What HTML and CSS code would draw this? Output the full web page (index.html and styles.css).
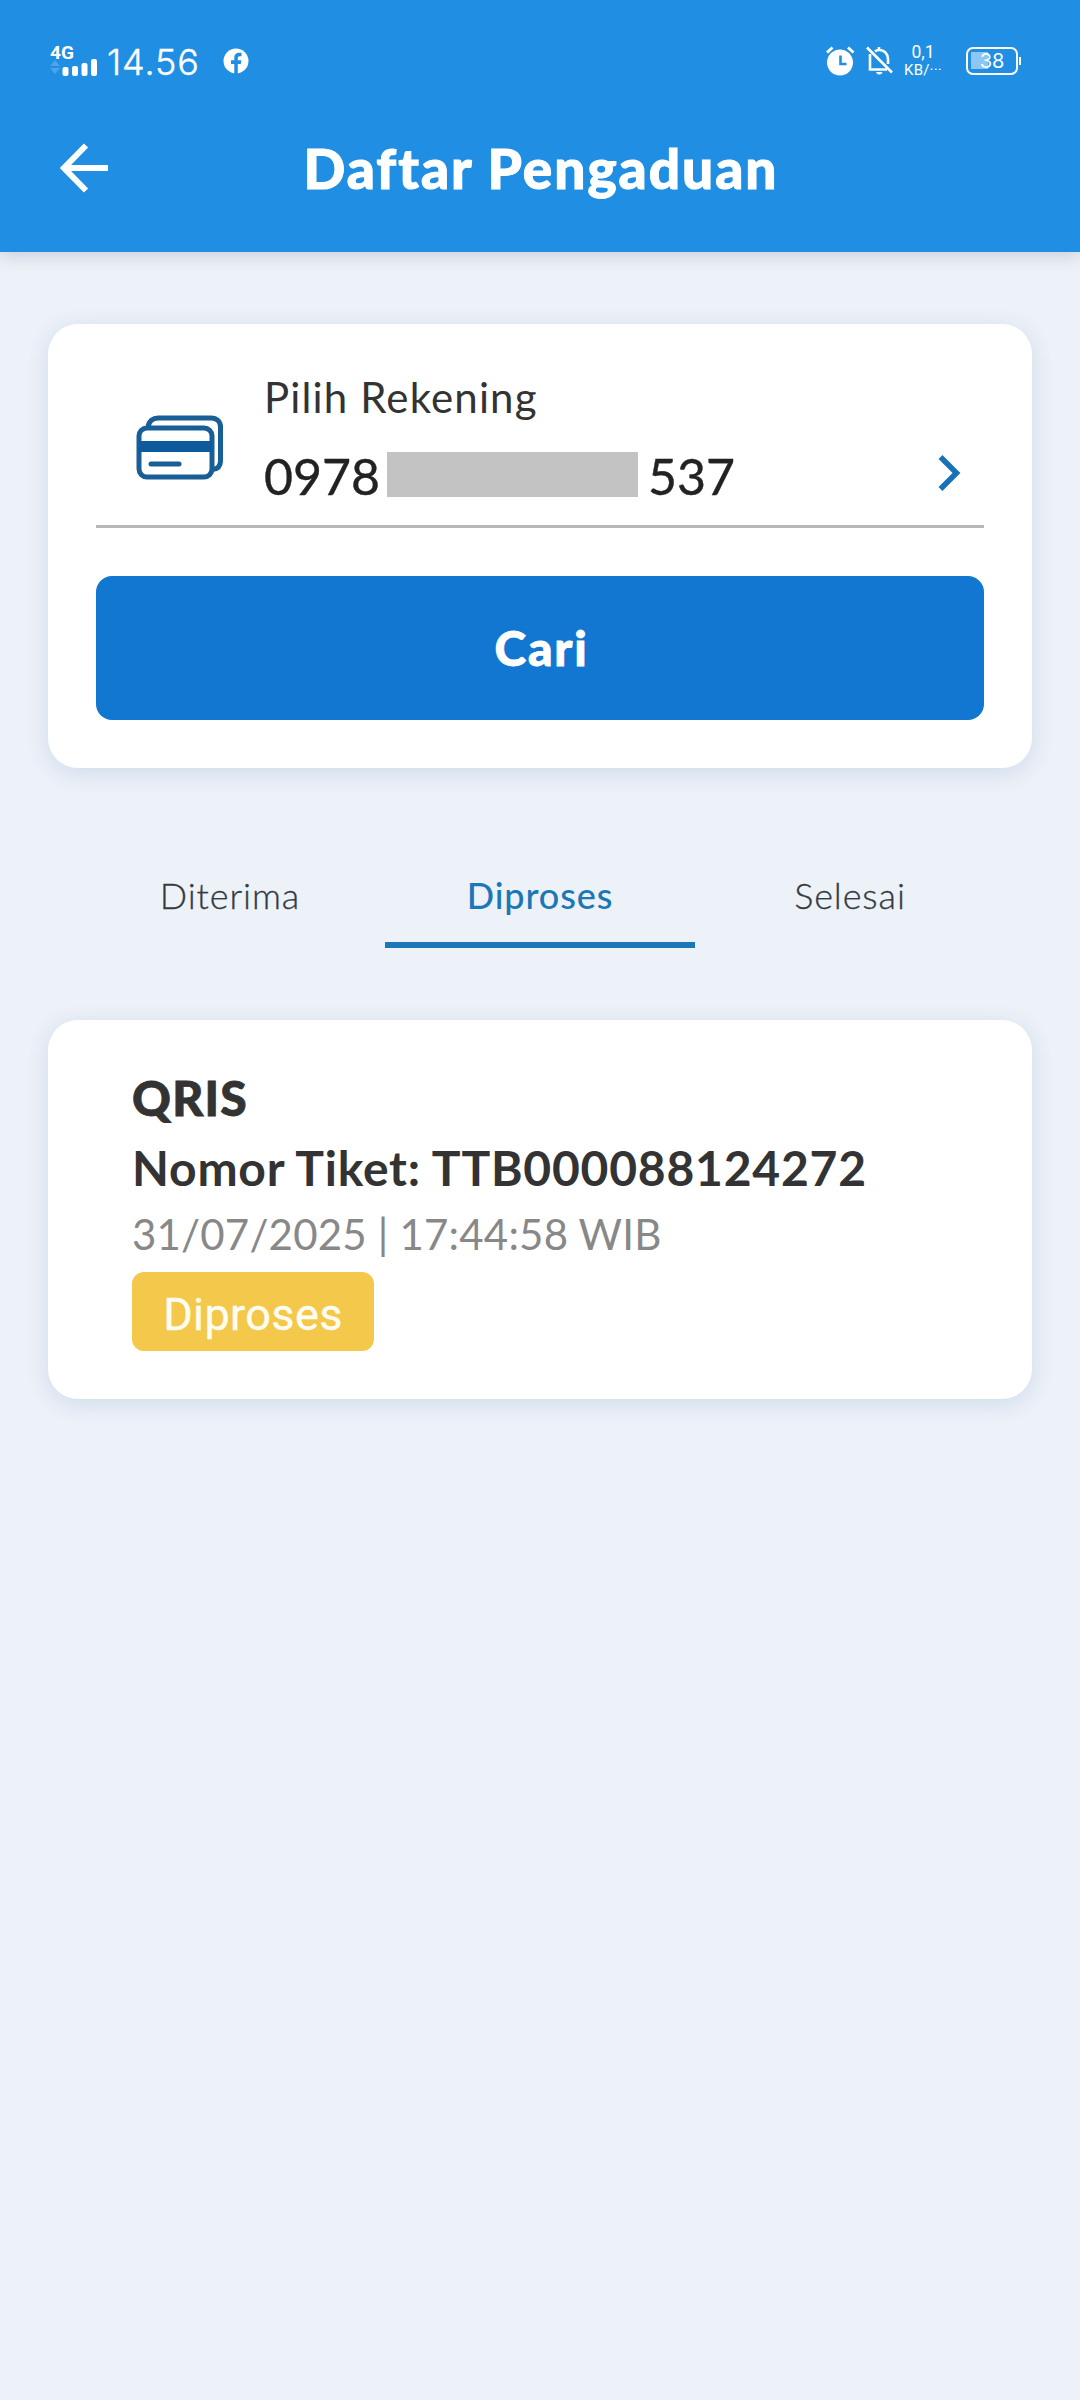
FILE: index.html
```html
<!DOCTYPE html>
<html lang="id">
<head>
<meta charset="utf-8">
<title>Daftar Pengaduan</title>
<link rel="stylesheet" href="styles.css">
</head>
<body>
<header class="app-header">
  <div class="status-bar">
    <div class="signal">
      <span class="network">4G</span>
      <svg class="bars" width="36" height="17" viewBox="0 0 36 17" fill="#fff"><rect x="0.500" y="8" width="6" height="9" rx="2"/><rect x="10" y="7" width="6" height="10" rx="2"/><rect x="19.500" y="4" width="6" height="13" rx="2"/><rect x="29" y="0" width="6" height="17" rx="2"/></svg>
      <svg class="traffic" width="10" height="14" viewBox="0 0 10 14" fill="#4ba3ec"><path d="M5 0l5 6H0zM5 14l5-6H0z"/></svg>
    </div>
    <span class="clock">14.56</span>
    <svg class="facebook" width="26" height="26" viewBox="0 0 26 26"><circle cx="13" cy="13" r="12.500" fill="#fff"/><path d="M11.300 26V16H8v-3.700h3.300V10c0-3.600 2-5.200 5-5.200h2.200v3.400h-1.700c-1.500 0-2 .8-2 2v2.100h3.600l-.6 3.700h-3V26z" fill="#1f8ee3"/></svg>
    <div class="status-right">
      <svg class="alarm" width="30" height="30" viewBox="0 0 30 30"><circle cx="14" cy="16.500" r="13" fill="#fff"/><path d="M1 6.500L6.500 1.500M27.500 6.500L22 1.500" stroke="#fff" stroke-width="3"/><path d="M14.500 9.500v8.500h6" fill="none" stroke="#1f8ee3" stroke-width="2.600"/></svg>
      <svg class="bell" width="28" height="30" viewBox="0 0 28 30" fill="none" stroke="#fff" stroke-width="2.600"><path d="M4 8v15.500h17M9 5.500c1-1 2-1.500 4-1.500 5.500 0 9 4 9 9v5M13 1v3M1 1.500l25 25"/><path d="M10.500 26.500h5.500c-.5 2-5 2-5.500 0z" fill="#fff" stroke-width="1"/></svg>
      <div class="speed"><span>0,1</span><span>KB/···</span></div>
      <div class="battery"><span>38</span></div>
    </div>
  </div>
  <div class="title-bar">
    <svg class="back" width="50" height="50" viewBox="0 0 50 50" fill="none" stroke="#fff" stroke-width="6"><path d="M48 25H4M26 2.500L4 25l22 22.500"/></svg>
    <h1 class="title">Daftar Pengaduan</h1>
  </div>
</header>
<main class="content">
  <section class="card search-card">
    <div class="account">
      <svg class="cards-icon" width="88" height="66" viewBox="0 0 88 66" fill="none" stroke="#185f98" stroke-width="5"><path d="M12 12c1-6 5-9 10-9h53c6 0 9.500 4 9.500 9v34c0 5-3 8-8 8.500"/><rect x="3" y="13" width="73" height="49" rx="8"/><path d="M3 31.500h73" stroke="#0d5a9c" stroke-width="11"/><path d="M15 49h28" stroke-linecap="round"/></svg>
      <div class="account-text">
        <div class="label">Pilih Rekening</div>
        <div class="number"><span>0978</span><span class="mask"></span><span>537</span></div>
      </div>
      <svg class="chevron" width="24" height="38" viewBox="0 0 24 38" fill="none" stroke="#1872b8" stroke-width="5.500"><path d="M2.500 3L18.500 19 2.500 35"/></svg>
    </div>
    <button class="search-button">Cari</button>
  </section>
  <nav class="tabs">
    <div class="tab">Diterima</div>
    <div class="tab active">Diproses</div>
    <div class="tab">Selesai</div>
  </nav>
  <article class="card ticket">
    <div class="kind">QRIS</div>
    <div class="ticket-number">Nomor Tiket: TTB000088124272</div>
    <div class="date">31/07/2025 | 17:44:58 WIB</div>
    <div class="badge">Diproses</div>
  </article>
</main>
</body>
</html>
```
FILE: styles.css
```css
* { box-sizing: border-box; }
body {
  margin: 0;
  min-height: 2400px;
  background: #edf1f8;
  color: #333;
  font-family: Lato, "Open Sans", sans-serif;
  font-variant-ligatures: none;
}
svg { display: block; flex: none; }
.app-header {
  height: 252px;
  background: #1f8ee3;
  color: #fff;
  box-shadow: 0 3px 16px rgba(60, 80, 110, .22);
}
.status-bar {
  display: flex;
  height: 120px;
  padding: 2px 62px 0 50px;
  align-items: center;
  font-family: Inter, sans-serif;
}
.signal {
  display: grid;
  grid-template-columns: 12px 36px;
  grid-template-rows: 15px 17px;
  width: 48px;
  height: 32px;
}
.network { grid-column: 1 / 3; font: 700 19px/15px Roboto, sans-serif; }
.bars { grid-column: 2; grid-row: 2; margin-top: -1px; }
.traffic { grid-column: 1; grid-row: 2; }
.clock {
  margin-left: 9px;
  padding-top: 2px;
  font-size: 36px;
  font-weight: 300;
  letter-spacing: .9px;
  -webkit-text-stroke: .4px #fff;
}
.facebook { margin-left: 23px; }
.status-right { display: flex; align-items: center; margin-left: auto; height: 40px; }
.alarm { margin-left: -1px; }
.bell { margin-left: 10px; }
.speed {
  display: grid;
  grid-template-rows: 18px 16px;
  justify-items: center;
  width: 42px;
  margin-left: 8px;
  font: 17.500px/16px Roboto, sans-serif;
}
.speed span:last-child { font-size: 15px; letter-spacing: .2px; }
.battery {
  position: relative;
  display: flex;
  align-items: center;
  justify-content: center;
  width: 52px;
  height: 28px;
  margin-left: 22px;
  border: 2.500px solid #fff;
  border-radius: 7px;
  background: linear-gradient(#8ec6f3, #8ec6f3) 3px 3px / 17px 17px no-repeat;
  font-size: 20px;
}
.battery::after {
  content: "";
  position: absolute;
  right: -5px;
  width: 2px;
  height: 8px;
  background: #fff;
}
.title-bar {
  display: flex;
  align-items: center;
  height: 96px;
  padding: 0 60px;
}
.title {
  flex: 1;
  margin: 0 48px 0 0;
  font-size: 55px;
  font-weight: 900;
  letter-spacing: 1.950px;
  line-height: 96px;
  text-align: center;
  -webkit-text-stroke: 1px #fff;
}
.content { padding: 72px 48px 0; }
.card {
  border-radius: 30px;
  background: #fff;
  box-shadow: 0 5px 22px rgba(50, 110, 170, .16);
}
.search-card { height: 444px; padding: 48px; }
.account {
  display: flex;
  height: 156px;
  padding: 0 22px 0 40px;
  border-bottom: 3px solid #b8b8b8;
}
.cards-icon { margin-top: 43px; }
.account-text { flex: 1; margin-left: 40px; }
.label { font-size: 42px; letter-spacing: 1.150px; line-height: 50px; }
.number {
  display: flex;
  align-items: center;
  margin-top: 19px;
  color: #222;
  font-size: 50px;
  line-height: 70px;
  -webkit-text-stroke: .4px #222;
}
.mask { width: 251px; height: 45px; margin: -4px 10px 0 7px; background: #c3c3c3; }
.chevron { margin-top: 82px; }
.search-button {
  display: block;
  width: 100%;
  height: 144px;
  margin-top: 48px;
  padding: 0 0 0 3px;
  border: 0;
  border-radius: 16px;
  background: #1277d0;
  color: #fff;
  font: 900 48px/144px Lato, sans-serif;
  letter-spacing: 1.800px;
  -webkit-text-stroke: .8px #fff;
}
.tabs {
  display: grid;
  grid-template-columns: repeat(3, 310px);
  justify-content: center;
  height: 100px;
  margin-top: 80px;
}
.tab {
  color: #333a42;
  font-size: 36px;
  font-weight: 300;
  letter-spacing: .9px;
  line-height: 94px;
  text-align: center;
  -webkit-text-stroke: .3px currentColor;
}
.tab.active {
  border-bottom: 6px solid #1b77b5;
  color: #1b77b5;
  font-weight: 500;
  -webkit-text-stroke: 0;
}
.ticket { height: 379px; margin-top: 72px; padding: 48px 84px; }
.kind { font-size: 48px; font-weight: 900; letter-spacing: 1.200px; line-height: 60px; -webkit-text-stroke: .8px #333; }
.ticket-number { margin-top: 4px; font-size: 48px; font-weight: 700; letter-spacing: .78px; line-height: 72px; white-space: nowrap; }
.date { color: #888; font-size: 42px; letter-spacing: .2px; line-height: 60px; }
.badge {
  width: 242px;
  height: 79px;
  margin-top: 8px;
  border-radius: 12px;
  background: #f3c84b;
  color: #fffdf0;
  font: 400 45px/85px Roboto, sans-serif;
  letter-spacing: .4px;
  text-align: center;
  -webkit-text-stroke: .4px #fffdf0;
}
```
